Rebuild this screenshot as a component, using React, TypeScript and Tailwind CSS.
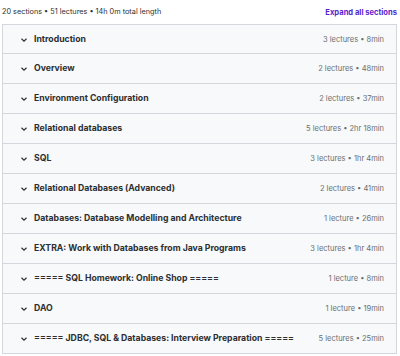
import React from "react";

const sections: [string, string][] = [
  ["Introduction", "3 lectures • 8min"],
  ["Overview", "2 lectures • 48min"],
  ["Environment Configuration", "2 lectures • 37min"],
  ["Relational databases", "5 lectures • 2hr 18min"],
  ["SQL", "3 lectures • 1hr 4min"],
  ["Relational Databases (Advanced)", "2 lectures • 41min"],
  ["Databases: Database Modelling and Architecture", "1 lecture • 26min"],
  ["EXTRA: Work with Databases from Java Programs", "3 lectures • 1hr 4min"],
  ["===== SQL Homework: Online Shop =====", "1 lecture • 8min"],
  ["DAO", "1 lecture • 19min"],
  ["===== JDBC, SQL & Databases: Interview Preparation =====", "5 lectures • 25min"],
];

function Chevron() {
  return (
    <svg width="8" height="8" viewBox="0 0 8 8" className="shrink-0">
      <path d="M1.5 2.8 L4 5.2 L6.5 2.8" fill="none" stroke="#2d2f31" strokeWidth="1.2" />
    </svg>
  );
}

export default function App() {
  return (
    <div className="w-[400px] h-[356px] bg-white overflow-hidden" style={{ fontFamily: "Inter, 'Noto Sans', sans-serif" }}>
      <div className="flex items-center justify-between h-[24px] pl-[2px] pr-[3px] pt-px">
        <span className="text-[7.3px] text-[#2d2f31]">20 sections • 51 lectures • 14h 0m total length</span>
        <span className="text-[7.6px] font-bold text-[#5624d0]">Expand all sections</span>
      </div>
      <div className="ml-[2px] mr-[3px] border border-[#d1d7dc]">
        {sections.map(([t, m], i) => (
          <div key={i} className={"flex items-center bg-[#f7f9fa] pl-[17px] pr-[12px] pt-px " + (i > 0 ? "h-[30px] border-t border-[#d1d7dc]" : "h-[28px]")}>
            <Chevron />
            <span className="ml-[6px] text-[8.7px] font-bold text-[#2d2f31] flex-1">{t}</span>
            <span className="text-[7.5px] text-[#6a6f73]">{m}</span>
          </div>
        ))}
      </div>
    </div>
  );
}
